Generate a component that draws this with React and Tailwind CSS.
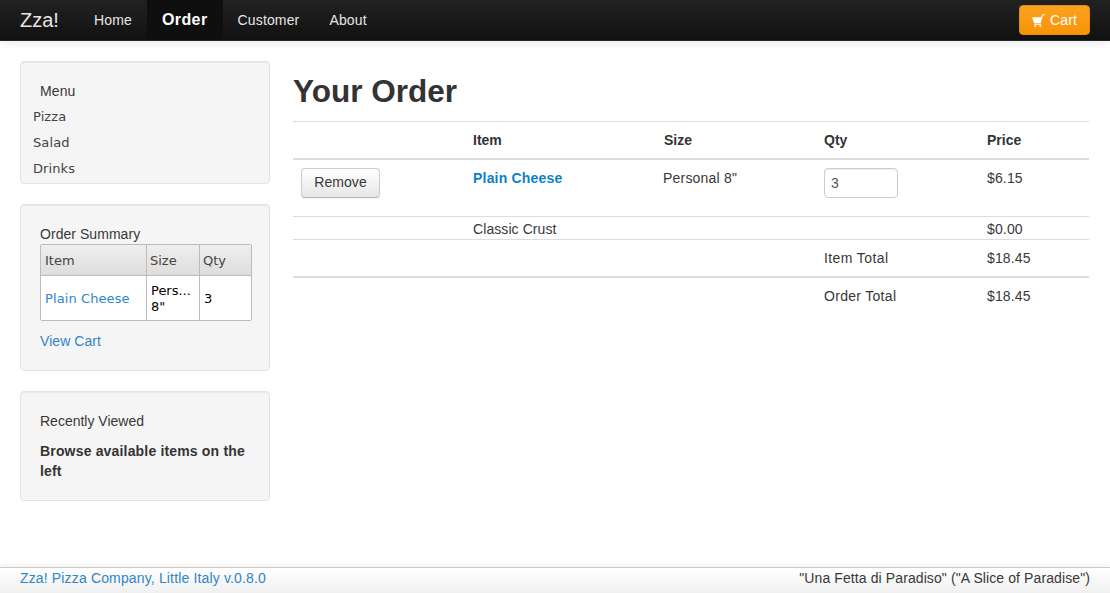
import React from 'react';

const arial = "font-['Liberation_Sans',Arial,sans-serif]";
const verdana = "font-['DejaVu_Sans',Verdana,sans-serif]";

const NavLink = ({ children, active }) => (
  <a
    href="#"
    className={
      active
        ? 'flex items-center h-full px-[15px] bg-[#0f0f0f] text-white text-[16px] font-bold tracking-[0.4px]'
        : 'flex items-center h-full px-[15px] text-[#e6e6e6] text-[14px] tracking-[0.15px]'
    }
  >
    {children}
  </a>
);

const Card = ({ className, children }) => (
  <div className={`bg-[#f5f5f5] border border-[#e3e3e3] rounded-[4px] shadow-[inset_0_1px_1px_rgba(0,0,0,0.05)] ${className}`}>
    {children}
  </div>
);

// drawn by hand, the icon packages' carts have a different basket
const CartIcon = () => (
  <svg viewBox="0 0 12 12" className="w-[13px] h-[13px] fill-white">
    <path d="M0 3h8.6l.7-2.4L12 0v.9l-2 .5L8 8.6H2L0 3z" />
    <rect x="2" y="9" width="6.5" height="1" />
    <circle cx="3" cy="11.2" r="0.9" />
    <circle cx="7.6" cy="11.2" r="0.9" />
  </svg>
);

const App = () => {
  return (
    <div className={`h-screen flex flex-col bg-white text-[14px] text-[#383838] overflow-hidden ${arial}`}>
      <header className="h-[41px] shrink-0 flex items-center pl-5 pr-5 bg-gradient-to-b from-[#222222] to-[#111111] border-b border-[#252525] shadow-[0_1px_10px_rgba(0,0,0,0.1)]">
        <a href="#" className="text-[20px] text-[#e6e6e6] w-[59px] leading-[41px]">Zza!</a>
        <nav className="flex h-full">
          <NavLink>Home</NavLink>
          <NavLink active>Order</NavLink>
          <NavLink>Customer</NavLink>
          <NavLink>About</NavLink>
        </nav>
        <button className="ml-auto h-[30px] w-[71px] flex items-center justify-center gap-[5px] rounded-[4px] border border-[#e38d13] bg-gradient-to-b from-[#fba21e] to-[#f89406] text-white text-[14px] tracking-[0.2px]">
          <CartIcon />
          Cart
        </button>
      </header>

      <main className="flex flex-1 pt-5 pl-5 pr-[21px] gap-[23px]">
        <aside className="w-[250px] shrink-0 flex flex-col gap-5">
          <Card className="h-[123px] pt-[19px]">
            <div className="pl-[19px] leading-5 text-[14px] tracking-[0.1px]">Menu</div>
            <ul className={`pl-3 pt-[3px] text-[13px] text-[#444] tracking-[0.1px] ${verdana}`}>
              <li className="h-[26px] leading-[26px]">Pizza</li>
              <li className="h-[26px] leading-[26px]">Salad</li>
              <li className="h-[26px] leading-[26px]">Drinks</li>
            </ul>
          </Card>

          <Card className="h-[167px] pt-[19px] px-[19px]">
            <div className="leading-5 tracking-[0.05px]">Order Summary</div>
            <table className={`w-[212px] table-fixed border-separate border-spacing-0 border border-[#bbb] rounded-[2px] text-[13px] ${verdana}`}>
              <colgroup>
                <col className="w-[106px]" />
                <col className="w-[53px]" />
                <col />
              </colgroup>
              <thead>
                <tr className="bg-gradient-to-b from-[#efefef] to-[#dcdcdc] text-[#444]">
                  <th className="h-[31px] px-1 pt-px font-normal text-left border-b border-r border-[#bbb]">Item</th>
                  <th className="pl-[3px] pt-px font-normal text-left border-b border-r border-[#bbb]">Size</th>
                  <th className="pl-[3px] pt-px font-normal text-left border-b border-[#bbb]">Qty</th>
                </tr>
              </thead>
              <tbody className="bg-white text-black">
                <tr>
                  <td className="px-1 pt-px h-[44px] text-[#2f86c9] tracking-[0.1px] border-r border-[#bbb]">Plain Cheese</td>
                  <td className="px-1 pt-px leading-4 border-r border-[#bbb]">Pers...<br />8"</td>
                  <td className="px-1 pt-px">3</td>
                </tr>
              </tbody>
            </table>
            <a href="#" className="block mt-[10px] leading-5 text-[#2f86c9] tracking-[0.05px]">View Cart</a>
          </Card>

          <Card className="h-[110px] pt-[19px] px-[19px]">
            <div className="leading-5">Recently Viewed</div>
            <p className="mt-[10px] font-bold leading-5 text-[14px] text-[#333] tracking-[0.17px]">Browse available items on the left</p>
          </Card>
        </aside>

        <section className="flex-1 min-w-0">
          <h1 className="mt-[12px] mb-[11px] text-[31.5px] leading-[37px] font-bold text-[#333]">Your Order</h1>
          <table className="w-[796px] table-fixed border-collapse">
            <colgroup>
              <col className="w-[172px]" />
              <col className="w-[191px]" />
              <col className="w-[160px]" />
              <col className="w-[163px]" />
              <col />
            </colgroup>
            <thead>
              <tr className="h-[37px] border-t border-b-2 border-[#ddd] text-left text-[#333]">
                <th></th>
                <th className="px-2 pt-[2px] font-bold">Item</th>
                <th className="px-2 pt-[2px] font-bold">Size</th>
                <th className="px-2 pt-[2px] font-bold">Qty</th>
                <th className="px-2 pt-[2px] font-bold">Price</th>
              </tr>
            </thead>
            <tbody>
              <tr className="h-[58px] border-b border-[#ddd] align-top">
                <td className="px-2 pt-2">
                  <button className="h-[30px] w-[79px] rounded-[4px] border border-[#ccc] border-b-[#b3b3b3] bg-gradient-to-b from-white to-[#e6e6e6] shadow-[0_1px_2px_rgba(0,0,0,0.05)] text-[14px] tracking-[0.05px]">Remove</button>
                </td>
                <td className="px-2 pt-2 leading-5 font-bold text-[#0e7fc7] tracking-[0.2px]">Plain Cheese</td>
                <td className="px-2 pt-2 leading-5 pl-[7px] tracking-[0.2px]">Personal 8"</td>
                <td className="px-2 pt-2">
                  <input
                    readOnly
                    value="3"
                    className="block w-[74px] h-[30px] px-[6px] rounded-[4px] border border-[#ccc] text-[14px] text-[#555] shadow-[inset_0_1px_1px_rgba(0,0,0,0.075)]"
                  />
                </td>
                <td className="px-2 pt-2 leading-5 tracking-[0.15px]">$6.15</td>
              </tr>
              <tr className="h-[23px] border-b border-[#ddd]">
                <td></td>
                <td className="px-2 pt-[2px] leading-5 tracking-[0.08px]">Classic Crust</td>
                <td></td>
                <td></td>
                <td className="px-2 pt-[2px] leading-5 tracking-[0.15px]">$0.00</td>
              </tr>
              <tr className="h-[37px] border-b-2 border-[#ddd]">
                <td></td>
                <td></td>
                <td></td>
                <td className="px-2 pt-px tracking-[0.4px]">Item Total</td>
                <td className="px-2 pt-px tracking-[0.15px]">$18.45</td>
              </tr>
              <tr className="h-[38px]">
                <td></td>
                <td></td>
                <td></td>
                <td className="px-2 tracking-[0.3px]">Order Total</td>
                <td className="px-2 tracking-[0.15px]">$18.45</td>
              </tr>
            </tbody>
          </table>
        </section>
      </main>

      <footer className="h-[26px] shrink-0 flex items-center justify-between pl-5 pr-5 pb-1 border-t border-[#ccc] bg-gradient-to-b from-white to-[#f0f0f0] shadow-[0_-1px_6px_rgba(0,0,0,0.08)]">
        <a href="#" className="text-[#2f86c9] tracking-[0.15px]">Zza! Pizza Company, Little Italy v.0.8.0</a>
        <span className="tracking-[0.1px]">"Una Fetta di Paradiso" ("A Slice of Paradise")</span>
      </footer>
    </div>
  );
};

export default App;
